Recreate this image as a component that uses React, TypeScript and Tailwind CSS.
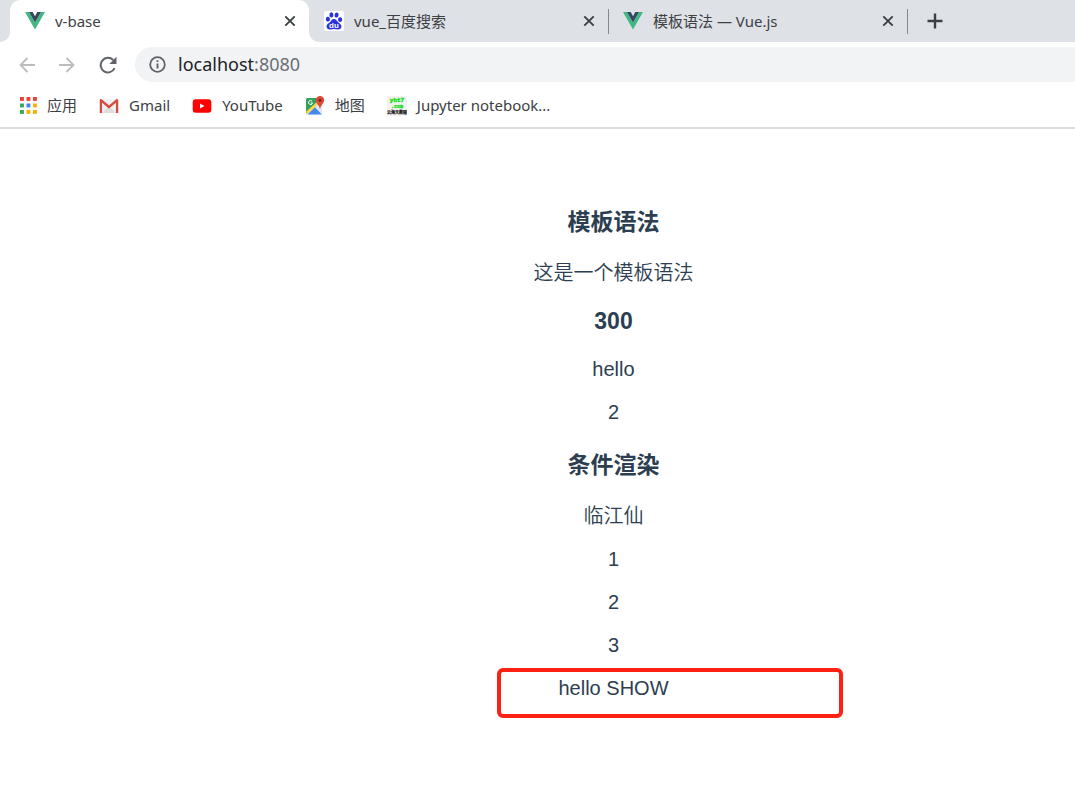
import React from "react";

type IconProps = { className?: string };

function VueIcon({ className = "" }: IconProps) {
  return (
    <svg viewBox="0 0 20 18" aria-hidden="true" className={`h-[18px] w-5 shrink-0 ${className}`}>
      <path d="M0 0h4l6 10.4L16 0h4L10 17.6z" fill="#41b883" />
      <path d="M4 0h3.7L10 4.2 12.300 0H16l-6 10.400z" fill="#34495e" />
    </svg>
  );
}

function BaiduIcon() {
  return (
    <svg viewBox="0 0 20 20" aria-hidden="true" className="h-5 w-5 shrink-0">
      <rect width="20" height="20" rx="2" fill="#fff" />
      <g fill="#2a32e0">
        <ellipse cx="3.900" cy="8.200" rx="2.100" ry="2.400" transform="rotate(-12 3.9 8.2)" />
        <ellipse cx="7.400" cy="3.900" rx="2" ry="2.600" />
        <ellipse cx="12.600" cy="4" rx="2" ry="2.600" transform="rotate(10 12.6 4)" />
        <ellipse cx="16.100" cy="8.600" rx="2.100" ry="2.300" transform="rotate(8 16.1 8.6)" />
        <path d="M10 8c-2 0-2.700 1.700-3.800 2.900-1.700 1.500-3.900 2.500-3.700 4.700.2 2.200 1.900 3.100 3.800 2.900 1.300-.1 2.400-.4 3.700-.4s2.500.3 3.700.4c2 .1 3.700-.8 3.800-3 .1-2.200-2.200-3.300-3.500-4.600C12.700 9.700 12 8 10 8z" />
      </g>
      <text x="10" y="16.800" textAnchor="middle" fontSize="8" fontWeight="700" fill="#fff" fontFamily="Liberation Sans, sans-serif">
        du
      </text>
    </svg>
  );
}

function CloseIcon() {
  return (
    <svg viewBox="0 0 12 12" aria-hidden="true" className="h-3 w-3">
      <path d="M1.300 1.300l9.400 9.400M10.700 1.300l-9.400 9.400" stroke="#3c4043" strokeWidth="1.900" />
    </svg>
  );
}

function AppsIcon() {
  const colors = ["#ea4335", "#ea4335", "#ea4335", "#34a853", "#4285f4", "#fbaf04", "#34a853", "#fbaf04", "#fbaf04"];
  return (
    <svg viewBox="0 0 17 17" aria-hidden="true" className="h-[17px] w-[17px] shrink-0">
      {colors.map((fill, i) => (
        <rect key={i} x={(i % 3) * 6.500} y={Math.floor(i / 3) * 6.500} width="3.900" height="3.900" fill={fill} />
      ))}
    </svg>
  );
}

function GmailIcon() {
  return (
    <svg viewBox="0 0 20 16" aria-hidden="true" className="h-4 w-5 shrink-0">
      <rect x="1" y="1" width="18" height="14" rx="1.500" fill="#f1f1f1" />
      <path d="M3 15l7-7 7 7z" fill="#dedede" />
      <path d="M1.900 15V2.200L10 9l8.100-6.800V15" fill="none" stroke="#d54b3d" strokeWidth="2.300" strokeLinejoin="round" />
    </svg>
  );
}

function YouTubeIcon() {
  return (
    <svg viewBox="0 0 20 14" aria-hidden="true" className="h-[14px] w-5 shrink-0">
      <rect x=".7" y=".3" width="18.600" height="13.400" rx="3" fill="#f00" />
      <path d="M8 4.500v5L12.500 7z" fill="#fff" />
    </svg>
  );
}

function MapsIcon() {
  return (
    <svg viewBox="0 0 20 20" aria-hidden="true" className="h-5 w-5 shrink-0">
      <rect x="1" y="2" width="16" height="16.500" rx="1.500" fill="#e8eaed" />
      <path d="M1 3.500A1.500 1.500 0 0 1 2.500 2H13l1 6L1 17.500z" fill="#34a05a" />
      <path d="M2.500 18.500l7.300-7.500 7 7.500z" fill="#4688f1" />
      <path d="M1 15.800L13.500 4.500l1.500 2L2.500 18.200z" fill="#fdd64b" />
      <path d="M10 10.800l2-2 5 5V18z" fill="#e3e6ea" />
      <path d="M7.200 5.400A2 2 0 1 0 7.500 7H5.800" fill="none" stroke="#fff" strokeWidth="1" />
      <path d="M15 0a4.200 4.200 0 0 0-4.200 4.300c0 3 3.500 4.700 4.200 9 .7-4.300 4.200-6 4.200-9A4.200 4.200 0 0 0 15 0z" fill="#e0483a" />
      <circle cx="15" cy="4.300" r="1.500" fill="#7c2119" />
    </svg>
  );
}

function NotebookIcon() {
  return (
    <svg viewBox="0 0 20 20" aria-hidden="true" className="h-5 w-5 shrink-0">
      <rect width="20" height="20" fill="#f1f1f1" />
      <g textAnchor="middle" fontWeight="700">
        <text x="10" y="6" fontSize="6" fill="#0be00b" stroke="#0be00b" strokeWidth=".4" fontFamily="Liberation Mono, monospace">yht7</text>
        <text x="10" y="11.500" fontSize="5" fill="#0be00b" stroke="#0be00b" strokeWidth=".3" fontFamily="Liberation Mono, monospace">.com</text>
        <text x="10" y="17.500" fontSize="4" fill="#111" stroke="#111" strokeWidth=".2" fontFamily="Noto Sans CJK SC, sans-serif">云海天教程</text>
      </g>
    </svg>
  );
}

function ArrowIcon({ className = "" }: IconProps) {
  return (
    <svg viewBox="0 0 16 16" aria-hidden="true" className={`h-4 w-4 ${className}`}>
      <path d="M16 8H1.500M8.500 1L1.500 8l7 7" fill="none" stroke="#babcbe" strokeWidth="1.800" />
    </svg>
  );
}

function ReloadIcon() {
  return (
    <svg viewBox="0 0 18 18" aria-hidden="true" className="h-[18px] w-[18px]">
      <path d="M15.600 12.200A7.300 7.300 0 1 1 14.200 4" fill="none" stroke="#5f6368" strokeWidth="2" />
      <path d="M17.500 .8v7.200h-7.200z" fill="#5f6368" />
    </svg>
  );
}

function InfoIcon() {
  return (
    <svg viewBox="0 0 17 17" aria-hidden="true" className="h-[17px] w-[17px] shrink-0">
      <circle cx="8.500" cy="8.500" r="7.300" fill="none" stroke="#5f6368" strokeWidth="1.800" />
      <path d="M8.500 7.500v5M8.500 4.200v1.900" stroke="#5f6368" strokeWidth="1.900" />
    </svg>
  );
}

function TabFoot({ className }: { className: string }) {
  return (
    <svg viewBox="0 0 10 10" aria-hidden="true" className={`absolute bottom-0 h-[10px] w-[10px] ${className}`}>
      <path d="M10 0v10H0A10 10 0 0 0 10 0z" fill="#fff" />
    </svg>
  );
}

type TabProps = { icon: React.ReactNode; title: string; active?: boolean };

function Tab({ icon, title, active = false }: TabProps) {
  return (
    <div
      className={`relative flex h-full w-[299px] min-w-0 items-center pr-[13px] pl-[15px] ${
        active ? "z-10 rounded-t-[10px] bg-white" : ""
      }`}
    >
      {active && <TabFoot className="right-full" />}
      {active && <TabFoot className="left-full -scale-x-100" />}
      <button type="button" role="tab" aria-selected={active} className="flex min-w-0 flex-1 items-center gap-[10px] text-left">
        {icon}
        <span className="truncate">{title}</span>
      </button>
      <button type="button" aria-label={`Close ${title}`}>
        <CloseIcon />
      </button>
      {!active && <span className="absolute -right-px h-[25px] w-px bg-[#85898e]" />}
    </div>
  );
}

const bookmarks = [
  { label: "应用", icon: <AppsIcon /> },
  { label: "Gmail", icon: <GmailIcon /> },
  { label: "YouTube", icon: <YouTubeIcon /> },
  { label: "地图", icon: <MapsIcon /> },
  { label: "Jupyter notebook...", icon: <NotebookIcon /> },
];

export default function App() {
  return (
    <div className="min-h-screen bg-white">
      <header className="border-b-2 border-[#dadce0] font-['Noto_Sans','Noto_Sans_CJK_SC',sans-serif] text-[15px] text-[#3c4043]">
        <div role="tablist" className="flex h-[42px] items-center bg-[#dee1e6] pl-[10px]">
          <Tab active icon={<VueIcon />} title="v-base" />
          <Tab icon={<BaiduIcon />} title="vue_百度搜索" />
          <Tab icon={<VueIcon />} title="模板语法 — Vue.js" />
          <button type="button" aria-label="New tab" className="ml-5">
            <svg viewBox="0 0 16 16" aria-hidden="true" className="h-4 w-4">
              <path d="M8 .5v15M.5 8h15" stroke="#3c4043" strokeWidth="2.400" />
            </svg>
          </button>
        </div>
        <div className="flex items-center pt-[5px] pl-[19px]">
          <nav className="flex items-center gap-6" aria-label="History">
            <button type="button" aria-label="Back" disabled>
              <ArrowIcon />
            </button>
            <button type="button" aria-label="Forward" disabled>
              <ArrowIcon className="rotate-180" />
            </button>
            <button type="button" aria-label="Reload">
              <ReloadIcon />
            </button>
          </nav>
          <div className="ml-[18px] flex h-[35px] flex-1 items-center gap-3 rounded-l-full bg-[#f1f3f4] pl-[14px]">
            <InfoIcon />
            <a href="http://localhost:8080" className="text-[18px] text-[#202124]">
              localhost<span className="text-[#6b6f74]">:8080</span>
            </a>
          </div>
        </div>
        <nav aria-label="Bookmarks" className="flex h-[45px] items-center gap-[22px] pt-0.5 pl-5">
          {bookmarks.map(({ label, icon }) => (
            <a key={label} href="#" className="flex items-center gap-[10px]">
              {icon}
              <span>{label}</span>
            </a>
          ))}
        </nav>
      </header>

      <main className="pt-[78px] pl-[152px] text-center font-['Liberation_Sans','Noto_Sans_CJK_SC',sans-serif] text-[20px] leading-6 text-[#2c3e50]">
        <h3 className="mb-6 text-[23px] leading-[30px] font-bold">模板语法</h3>
        <p className="font-[350]">这是一个模板语法</p>
        <p className="my-[23px] text-[23px] leading-[26px] font-bold">300</p>
        <p className="mb-[19px]">hello</p>
        <p>2</p>
        <h3 className="mt-[26px] mb-6 text-[23px] leading-[30px] font-bold">条件渲染</h3>
        <p className="mb-[19px] font-[350]">临江仙</p>
        <p className="mb-[19px]">1</p>
        <p className="mb-[19px]">2</p>
        <p className="mb-[19px]">3</p>
        <p className="relative">
          hello SHOW
          <span className="absolute -top-2 left-1/2 -ml-[117px] h-[50px] w-[346px] rounded-[6px] border-4 border-[#fd2114]" />
        </p>
      </main>
    </div>
  );
}
